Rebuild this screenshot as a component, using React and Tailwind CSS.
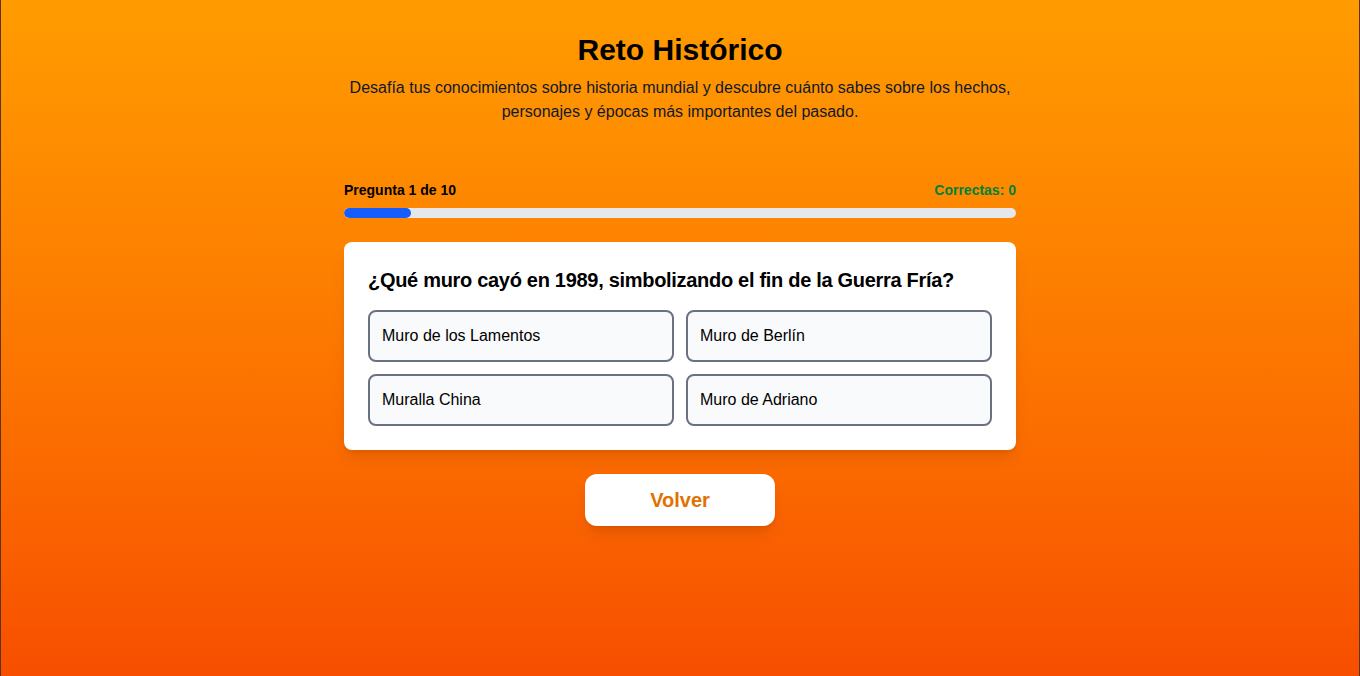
const options = ["Muro de los Lamentos", "Muro de Berlín", "Muralla China", "Muro de Adriano"];

export default function App() {
  const current = 1;
  const total = 10;
  const correct = 0;
  const progress = (current / total) * 100;

  return (
    <div
      className="min-h-screen bg-gradient-to-b from-[#ff9c00] to-[#f74e00] border-x border-[#5c3510] px-4 py-8"
      style={{ fontFamily: '"Liberation Sans", Roboto, sans-serif' }}
    >
      <div className="max-w-2xl mx-auto flex flex-col">
        {/* Header */}
        <div className="text-center">
          <h1 className="text-3xl font-bold text-black">Reto Histórico</h1>
          <p className="mt-2 text-base text-gray-900 leading-6">
            Desafía tus conocimientos sobre historia mundial y descubre cuánto sabes sobre los hechos,
            personajes y épocas más importantes del pasado.
          </p>
        </div>

        {/* Progress */}
        <div className="mt-14">
          <div className="flex justify-between items-center mb-2 text-sm font-semibold">
            <span className="text-black">Pregunta {current} de {total}</span>
            <span className="text-green-700">Correctas: {correct}</span>
          </div>
          <div className="w-full h-2.5 bg-gray-200 rounded-full overflow-hidden">
            <div className="h-full bg-blue-600 rounded-full" style={{ width: `${progress}%` }} />
          </div>
        </div>

        {/* Question card */}
        <div className="mt-6 bg-white rounded-lg shadow-lg p-6">
          <h2 className="text-xl font-bold text-black mb-4 tracking-[-0.3px]">
            ¿Qué muro cayó en 1989, simbolizando el fin de la Guerra Fría?
          </h2>
          <div className="grid grid-cols-2 gap-3">
            {options.map((opt) => (
              <button
                key={opt}
                className="text-left px-3 py-3 text-base leading-6 text-black bg-gray-50 border-2 border-gray-500 rounded-lg"
              >
                {opt}
              </button>
            ))}
          </div>
        </div>

        {/* Back button */}
        <div className="mt-6 flex justify-center">
          <button className="w-[190px] py-3 bg-white text-amber-600 text-xl font-bold rounded-xl shadow-lg">
            Volver
          </button>
        </div>
      </div>
    </div>
  );
}
